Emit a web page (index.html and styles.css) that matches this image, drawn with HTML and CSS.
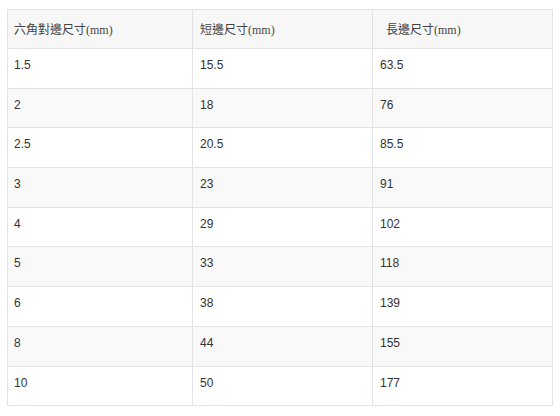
FILE: index.html
```html
<!DOCTYPE html>
<html>
<head>
<meta charset="utf-8">
<link rel="stylesheet" href="styles.css">
</head>
<body>
<div class="wrap">
<table class="spec">
  <colgroup><col class="c1"><col class="c2"><col class="c3"></colgroup>
  <thead>
    <tr><th>六角對邊尺寸(mm)</th><th>短邊尺寸(mm)</th><th class="shift">長邊尺寸(mm)</th></tr>
  </thead>
  <tbody>
    <tr><td>1.5</td><td>15.5</td><td>63.5</td></tr>
    <tr><td>2</td><td>18</td><td>76</td></tr>
    <tr><td>2.5</td><td>20.5</td><td>85.5</td></tr>
    <tr><td>3</td><td>23</td><td>91</td></tr>
    <tr><td>4</td><td>29</td><td>102</td></tr>
    <tr><td>5</td><td>33</td><td>118</td></tr>
    <tr><td>6</td><td>38</td><td>139</td></tr>
    <tr><td>8</td><td>44</td><td>155</td></tr>
    <tr><td>10</td><td>50</td><td>177</td></tr>
  </tbody>
</table>
</div>
</body>
</html>
```
FILE: styles.css
```css
html, body { margin: 0; padding: 0; background: #fff; }
.wrap { padding: 9px 0 0 7px; }
.spec {
  border-collapse: collapse;
  table-layout: fixed;
  width: 545px;
  font-family: "Liberation Sans", Arial, sans-serif;
  font-size: 12px;
  color: #333;
}
.c1 { width: 185px; }
.c2 { width: 180px; }
.c3 { width: 180px; }
.spec th, .spec td {
  border: 1px solid #e3e3e3;
  text-align: left;
  vertical-align: top;
  line-height: 17px;
  padding: 8px 8px 13.7px 6px;
}
.spec th {
  font-family: "Liberation Serif", "Noto Sans CJK TC", serif;
  font-weight: normal;
  color: #444;
  background: #f7f7f7;
  padding: 12px 8px 9px 6px;
}
.spec td:nth-child(2), .spec th:nth-child(2) { padding-left: 7px; }
.spec td:nth-child(3) { padding-left: 7px; }
.spec th.shift { padding-left: 13px; }
.spec tbody tr:nth-child(even) td { background: #f9f9f9; }
```
